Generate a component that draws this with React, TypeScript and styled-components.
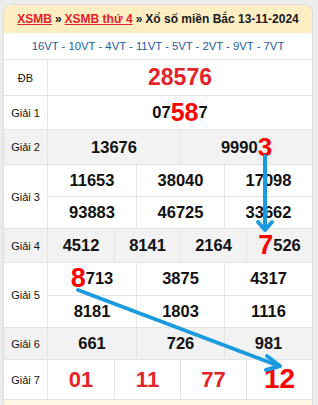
import styled, { createGlobalStyle } from 'styled-components';

const GlobalStyle = createGlobalStyle`
  html, body {
    margin: 0;
    padding: 0;
    background: #ececec;
    font-family: 'Liberation Sans', Arial, sans-serif;
  }
`;

// #region StyledComponents

const PageStyled = styled.div`
  position: relative;
  width: 318px;
  height: 405px;
  overflow: hidden;
  box-sizing: border-box;
  padding: 4px 5px 0 3px;
`;

const CardStyled = styled.div`
  background: #fff;
  border: 1px solid #dcdcdc;
  border-bottom: none;
  border-radius: 8px 8px 0 0;
  overflow: hidden;
`;

const HeaderStyled = styled.div`
  height: 28px;
  background: #fdefc3;
  display: flex;
  align-items: center;
  justify-content: center;
  font-size: 12px;
  font-weight: bold;
  color: #1a1a1a;
  white-space: nowrap;
`;

const CrumbLinkStyled = styled.a`
  color: #e4232b;
  text-decoration: underline;
`;

const SepStyled = styled.span`
  margin: 0 3px;
`;

const CodesStyled = styled.div`
  height: 27px;
  box-sizing: border-box;
  border-bottom: 1px solid #e3e3e3;
  display: flex;
  align-items: center;
  justify-content: center;
  font-size: 11.3px;
  color: #1b5c9e;
  white-space: nowrap;
`;

const RowStyled = styled.div<{ $h: number; $shade?: boolean }>`
  display: grid;
  grid-template-columns: 44px 1fr;
  height: ${(p) => p.$h}px;
  box-sizing: border-box;
  border-bottom: 1px solid #e3e3e3;
  background: ${(p) => (p.$shade ? '#f2f2f2' : '#fff')};
`;

const LabelStyled = styled.div`
  display: flex;
  align-items: center;
  justify-content: center;
  border-right: 1px solid #e3e3e3;
  font-size: 11px;
  color: #111;
`;

const NumbersStyled = styled.div`
  display: flex;
  flex-direction: column;
`;

const NumberLineStyled = styled.div<{ $cols: number }>`
  flex: 1;
  display: grid;
  grid-template-columns: repeat(${(p) => p.$cols}, 1fr);
  & + & {
    border-top: 1px solid #e3e3e3;
  }
`;

const CellStyled = styled.div`
  display: flex;
  align-items: center;
  justify-content: center;
  font-size: 16.5px;
  font-weight: bold;
  color: #111;
  & + & {
    border-left: 1px solid #e3e3e3;
  }
`;

const RedNumStyled = styled.span<{ $size: number }>`
  color: #e4232b;
  font-size: ${(p) => p.$size}px;
  font-weight: bold;
`;

const HotDigitStyled = styled.span<{ $size: number }>`
  color: #ff0000;
  font-size: ${(p) => p.$size}px;
  line-height: 1;
`;

const FooterStyled = styled.div`
  height: 6px;
  background: #fdf8e6;
`;

const OverlayStyled = styled.svg`
  position: absolute;
  left: 0;
  top: 0;
  pointer-events: none;
`;

// #endregion

type Hot = { value: string; hot?: [number, number]; size?: number };

function Num({ value, hot, size = 26 }: Hot) {
  if (!hot) return <>{value}</>;
  const [a, b] = hot;
  return (
    <>
      {value.slice(0, a)}
      <HotDigitStyled $size={size}>{value.slice(a, b)}</HotDigitStyled>
      {value.slice(b)}
    </>
  );
}

type PrizeProps = {
  label: string;
  h: number;
  shade?: boolean;
  lines: Hot[][];
};

function Prize({ label, h, shade, lines }: PrizeProps) {
  return (
    <RowStyled $h={h} $shade={shade}>
      <LabelStyled>{label}</LabelStyled>
      <NumbersStyled>
        {lines.map((line, i) => (
          <NumberLineStyled key={i} $cols={line.length}>
            {line.map((n, j) => (
              <CellStyled key={j}>
                <Num {...n} />
              </CellStyled>
            ))}
          </NumberLineStyled>
        ))}
      </NumbersStyled>
    </RowStyled>
  );
}

const codes = ['16VT', '10VT', '4VT', '11VT', '5VT', '2VT', '9VT', '7VT'];

export default function App() {
  return (
    <>
      <GlobalStyle />
      <PageStyled>
        <CardStyled>
          <HeaderStyled>
            <CrumbLinkStyled href="#">XSMB</CrumbLinkStyled>
            <SepStyled>»</SepStyled>
            <CrumbLinkStyled href="#">XSMB thứ 4</CrumbLinkStyled>
            <SepStyled>»</SepStyled>
            Xổ số miền Bắc 13-11-2024
          </HeaderStyled>
          <CodesStyled>{codes.join(' - ')}</CodesStyled>

          <RowStyled $h={36}>
            <LabelStyled>ĐB</LabelStyled>
            <CellStyled>
              <RedNumStyled $size={23}>28576</RedNumStyled>
            </CellStyled>
          </RowStyled>

          <Prize label="Giải 1" h={34} lines={[[{ value: '07587', hot: [2, 4], size: 25 }]]} />
          <Prize
            label="Giải 2"
            h={35}
            shade
            lines={[[{ value: '13676' }, { value: '99903', hot: [4, 5], size: 26 }]]}
          />
          <Prize
            label="Giải 3"
            h={64}
            lines={[
              [{ value: '11653' }, { value: '38040' }, { value: '17098' }],
              [{ value: '93883' }, { value: '46725' }, { value: '33662' }],
            ]}
          />
          <Prize
            label="Giải 4"
            h={34}
            shade
            lines={[[{ value: '4512' }, { value: '8141' }, { value: '2164' }, { value: '7526', hot: [0, 1], size: 27 }]]}
          />
          <Prize
            label="Giải 5"
            h={65}
            lines={[
              [{ value: '8713', hot: [0, 1], size: 27 }, { value: '3875' }, { value: '4317' }],
              [{ value: '8181' }, { value: '1803' }, { value: '1116' }],
            ]}
          />
          <Prize label="Giải 6" h={32} shade lines={[[{ value: '661' }, { value: '726' }, { value: '981' }]]} />

          <RowStyled $h={40}>
            <LabelStyled>Giải 7</LabelStyled>
            <NumberLineStyled $cols={4}>
              <CellStyled><RedNumStyled $size={22}>01</RedNumStyled></CellStyled>
              <CellStyled><RedNumStyled $size={22}>11</RedNumStyled></CellStyled>
              <CellStyled><RedNumStyled $size={22}>77</RedNumStyled></CellStyled>
              <CellStyled>
                <RedNumStyled $size={22}>
                  <HotDigitStyled $size={28}>12</HotDigitStyled>
                </RedNumStyled>
              </CellStyled>
            </NumberLineStyled>
          </RowStyled>
          <FooterStyled />
        </CardStyled>

        <OverlayStyled width="318" height="405" viewBox="0 0 318 405">
          <g stroke="#1a9be0" strokeWidth="4" fill="none" strokeLinecap="round" strokeLinejoin="round">
            <line x1="265" y1="156" x2="265" y2="229" />
            <polyline points="258,222 265,230 272,222" />
            <line x1="78" y1="290" x2="279" y2="366" />
            <polyline points="267,356 280,366 266,370" />
          </g>
        </OverlayStyled>
      </PageStyled>
    </>
  );
}
